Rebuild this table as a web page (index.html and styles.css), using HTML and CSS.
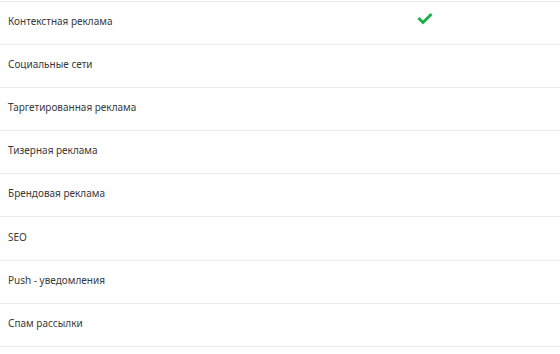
FILE: index.html
```html
<!DOCTYPE html>
<html lang="ru">
<head>
<meta charset="utf-8">
<link rel="stylesheet" href="styles.css">
</head>
<body>
<div class="list">
  <div class="row"><span class="name">Контекстная реклама</span><span class="mark"><svg width="16" height="13" viewBox="0 0 16 13"><path d="M1.5 6 L6 10.5 L14.5 2" fill="none" stroke="#1ab04a" stroke-width="3"/></svg></span></div>
  <div class="row"><span class="name">Социальные сети</span><span class="mark"></span></div>
  <div class="row"><span class="name">Таргетированная реклама</span><span class="mark"></span></div>
  <div class="row"><span class="name">Тизерная реклама</span><span class="mark"></span></div>
  <div class="row"><span class="name">Брендовая реклама</span><span class="mark"></span></div>
  <div class="row"><span class="name">SEO</span><span class="mark"></span></div>
  <div class="row"><span class="name">Push - уведомления</span><span class="mark"></span></div>
  <div class="row"><span class="name">Спам рассылки</span><span class="mark"></span></div>
</div>
</body>
</html>
```
FILE: styles.css
```css
html, body { margin: 0; padding: 0; background: #fff; }
body { font-family: "Noto Sans", "Open Sans", sans-serif; color: #3a3a3a; }
.list { padding-top: 1px; }
.row {
  display: flex;
  align-items: center;
  height: 42.1px;
  border-top: 1px solid #ebebeb;
  padding-left: 8px;
}
.row:last-child { border-bottom: 1px solid #ebebeb; }
.name { width: 409px; font-size: 10px; line-height: 12px; margin-bottom: 4px; }
.mark { width: 16px; display: flex; justify-content: center; margin-top: -9px; }
.mark svg { display: block; }
```
